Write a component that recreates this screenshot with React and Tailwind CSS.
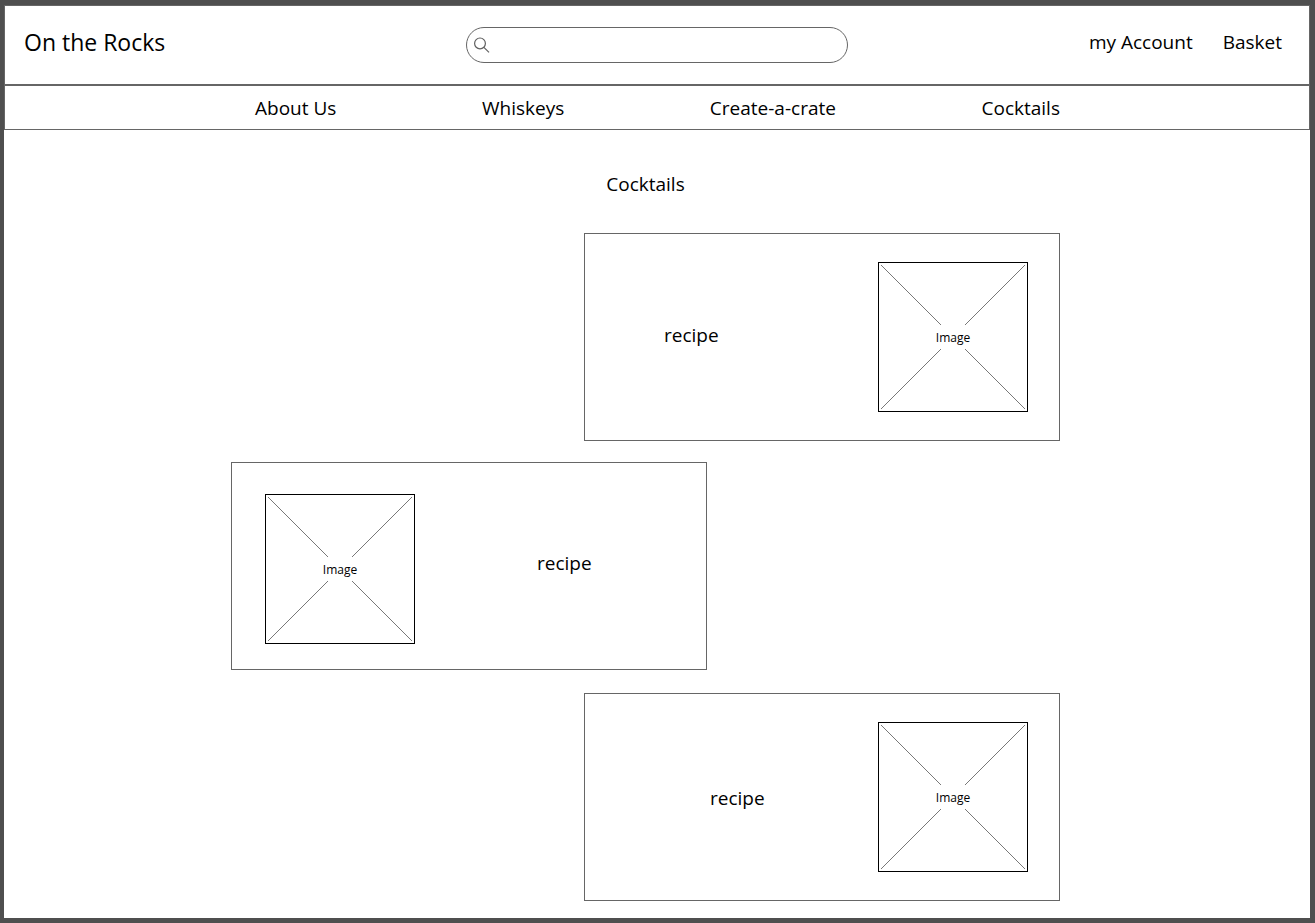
const navLinks = ["About Us", "Whiskeys", "Create-a-crate", "Cocktails"];

function SearchIcon() {
  return (
    <svg className="size-4 shrink-0" viewBox="0 0 16 16" fill="none" stroke="#5f5f5f" strokeWidth="1.2" aria-hidden="true">
      <circle cx="6" cy="6.4" r="5.4" />
      <path d="M9.9 10.3 15 15.4" />
    </svg>
  );
}

function ImagePlaceholder() {
  return (
    <div className="grid size-[150px] shrink-0 place-items-center border border-black">
      <svg className="col-start-1 row-start-1 size-[148px]" viewBox="0 0 148 148" stroke="#555" strokeWidth="0.8" aria-hidden="true">
        <path d="M2 2 62 62M146 2 86 62M2 146 62 86M146 146 86 86" />
      </svg>
      <span className="col-start-1 row-start-1 pt-0.5 text-[12px] leading-4">Image</span>
    </div>
  );
}

function RecipeCard({ className, textClassName, imageFirst }) {
  return (
    <article className={"flex h-[208px] w-[476px] border border-[#666] " + className}>
      {imageFirst && <ImagePlaceholder />}
      <p className={textClassName}>recipe</p>
      {!imageFirst && <ImagePlaceholder />}
    </article>
  );
}

export default function App() {
  return (
    <div className="min-h-screen border-t-[5px] border-r-[5px] border-b-[5px] border-l-4 border-[#4f4f4f] bg-white font-['Open_Sans','Noto_Sans',sans-serif] text-[19px] leading-6 text-black">
      <header>
        <div className="grid h-20 grid-cols-[1fr_auto_1fr] items-center border border-[#666] pr-[27px] pl-[19px]">
          <a href="#" className="pb-1.5 text-[23px] leading-7">On the Rocks</a>
          <form role="search" className="ml-2 flex h-9 w-[382px] items-center gap-2 rounded-full border border-[#666] px-[7px]">
            <SearchIcon />
            <input type="search" aria-label="Search" className="min-w-0 flex-1 bg-transparent text-base outline-none" />
          </form>
          <div className="flex justify-end gap-[30px] pb-1.5">
            <a href="#account">my Account</a>
            <a href="#basket">Basket</a>
          </div>
        </div>
        <nav className="h-[45px] border border-[#666] pr-[23px]">
          <ul className="mx-auto flex h-full max-w-[829px] items-center justify-between pl-6">
            {navLinks.map((label) => (
              <li key={label}><a href="#">{label}</a></li>
            ))}
          </ul>
        </nav>
      </header>
      <main className="pr-[23px]">
        <div className="mx-auto flex max-w-[829px] flex-col gap-[21px] pt-[42px]">
          <h1 className="mb-4 text-center">Cocktails</h1>
          <RecipeCard className="justify-between self-end pt-7 pr-[31px] pl-[79px]" textClassName="pt-[61px]" />
          <RecipeCard className="mb-0.5 gap-[122px] self-start pt-[31px] pl-[33px]" textClassName="pt-[57px]" imageFirst />
          <RecipeCard className="justify-between self-end pt-7 pr-[31px] pl-[125px]" textClassName="pt-[64px]" />
        </div>
      </main>
    </div>
  );
}
